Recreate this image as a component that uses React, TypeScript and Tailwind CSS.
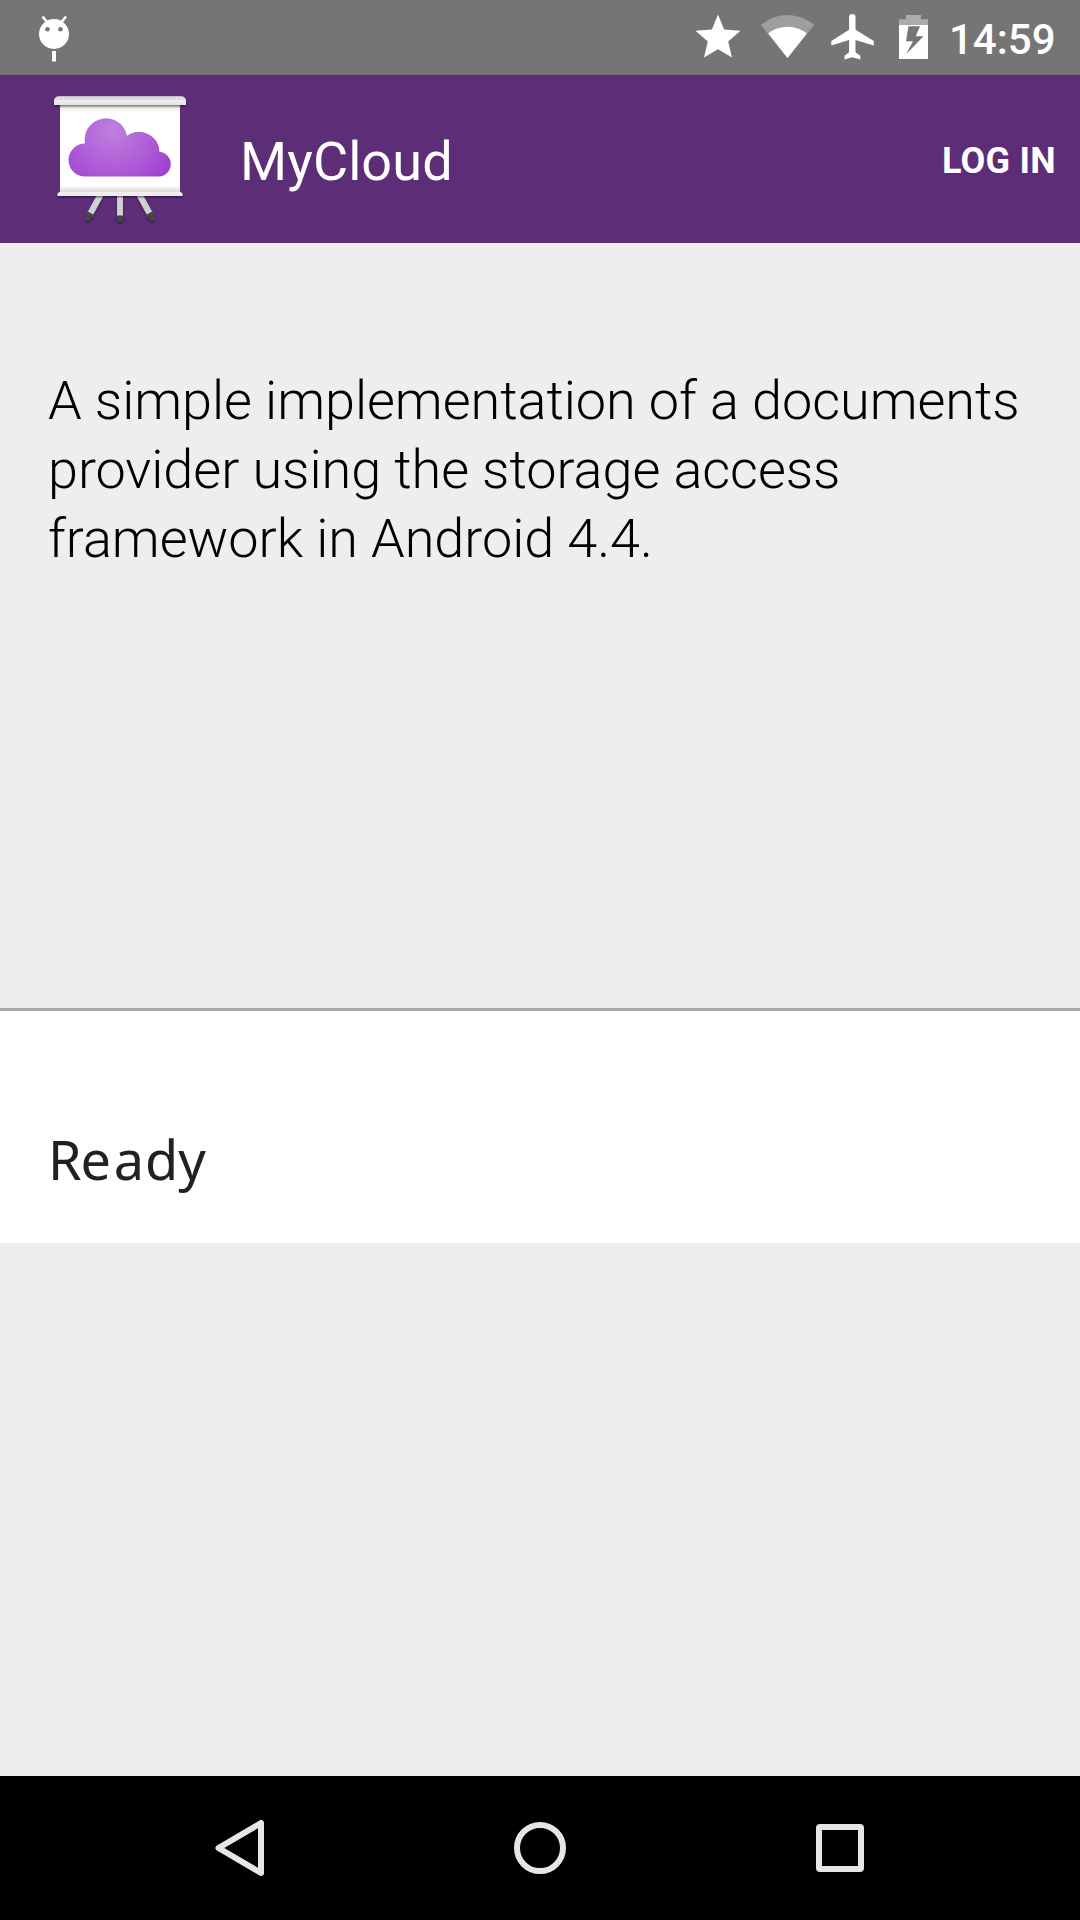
function StatusBar() {
  return (
    <div className="flex h-[75px] items-center bg-[#757575] pl-[36px] pr-[25px]">
      <svg className="h-[75px] w-[36px] shrink-0" viewBox="36 0 36 75">
        <path d="M42.5 16.5 47 22M66 16.5 61.500 22" stroke="#fff" strokeWidth="2.6" />
        <circle cx="54" cy="34" r="15" fill="#fff" />
        <circle cx="47.500" cy="29.300" r="2.300" fill="#757575" />
        <circle cx="60.500" cy="29.300" r="2.300" fill="#757575" />
        <rect x="52" y="51" width="4" height="10.500" fill="#fff" />
      </svg>
      <svg className="ml-auto h-[75px] w-[260px] shrink-0" viewBox="680 0 260 75" fill="#fff">
        <path d="M718 14.500 724.100 29.500 740.500 30.800 728.200 41.500 732 57.500 718 49.200 704 57.500 707.800 41.500 695.500 30.800 711.900 29.500Z" />
        <path d="M787.500 58 761 25Q773 15 787.500 15T814.300 25Z" fillOpacity=".3" />
        <path d="M787.500 58 768.200 33.500Q776.500 26.700 787.500 26.700T806.800 33.500Z" />
        <path d="M873.800 45.500V40.900L855.500 29.700V17.300A3.200 3.200 0 0 0 849.100 17.300V29.700L831.300 40.900V45.500L849.100 40V52.200L844.500 55.700V59.600L852.300 57.200 860.300 59.600V55.700L855.500 52.200V40Z" />
        <path d="M899 25V19.300H906V15H921V19.300H928V25Z" fillOpacity=".4" />
        <path fillRule="evenodd" d="M899 25H928V59H899ZM908.500 26.300 906 41.300H913L906.300 54 923.500 36.200H915.700L920 26.300Z" />
      </svg>
      <div className="ml-[9px] w-[106px] whitespace-nowrap pt-[4px] text-[42px] leading-[48px] font-medium text-white">14:59</div>
    </div>
  );
}

function CloudBoard() {
  return (
    <svg className="h-[144px] w-[144px] shrink-0" viewBox="48 87 144 144">
      <defs>
        <radialGradient id="cloud" gradientUnits="userSpaceOnUse" cx="113" cy="131" r="66">
          <stop stopColor="#c080e0" />
          <stop offset="1" stopColor="#a042d0" />
        </radialGradient>
        <linearGradient id="rail" x2="0" y2="1">
          <stop stopColor="#b9a9c4" />
          <stop offset=".15" stopColor="#dcd8de" />
          <stop offset=".4" stopColor="#dfdfdf" />
          <stop offset=".5" stopColor="#eee" />
          <stop offset="1" stopColor="#e2e2e2" />
        </linearGradient>
        <linearGradient id="sheet" x2="0" y2="1">
          <stop stopColor="#d0d0d0" />
          <stop offset=".04" stopColor="#ececec" />
          <stop offset=".1" stopColor="#fff" />
          <stop offset=".93" stopColor="#fff" />
          <stop offset="1" stopColor="#d6d6d6" />
        </linearGradient>
        <filter id="shade" x="-10%" y="-20%" width="120%" height="150%">
          <feDropShadow dx="0" dy="1.500" stdDeviation="1.300" floodOpacity=".5" />
        </filter>
      </defs>
      <g filter="url(#shade)" strokeWidth="6">
        <path d="M101 194 89.500 215M120 194V216M139 194 150.500 215" stroke="#cfcfcf" />
        <path d="M90.600 213 88 218M120 215.500V219.500M149.400 213 152 218" stroke="#454545" />
        <circle cx="88" cy="218" r="3" fill="#444" />
        <circle cx="120" cy="219" r="3" fill="#444" />
        <circle cx="152" cy="218" r="3" fill="#444" />
      </g>
      <rect x="60" y="104" width="120" height="88" fill="url(#sheet)" />
      <path filter="url(#shade)" d="M54 105V100Q55.500 96 59 96H181Q184.500 96 186 100V105Z" fill="url(#rail)" />
      <path filter="url(#shade)" d="M60 191.500H180L182.500 193.500V196H57.500V193.500Z" fill="#eee" />
      <path d="M85 176.600A16.500 16.500 0 0 1 85 143.600A21.200 21.200 0 0 1 127 135.800A20.600 20.600 0 0 1 159.500 151.700A12.500 12.500 0 0 1 159.200 176.600Z" fill="url(#cloud)" />
    </svg>
  );
}

export default function App() {
  return (
    <div className="flex h-[1920px] w-[1080px] flex-col overflow-hidden bg-[#eeeeee] font-['Roboto',sans-serif]">
      <StatusBar />
      <header className="flex h-[168px] items-center bg-[#5e2d78] pl-[48px] pr-[24px] text-white">
        <CloudBoard />
        <h1 className="ml-[48px] pt-[5px] text-[54px] leading-[64px] font-normal tracking-[0.1px]">MyCloud</h1>
        <button className="ml-auto pt-[4px] text-[36px] leading-[42px] font-bold tracking-[0.25px]">LOG IN</button>
      </header>
      <main className="flex grow flex-col">
        <section className="h-[768px] border-b-[3px] border-[#aaaaaa] px-[48px] pt-[123px]">
          <p className="whitespace-nowrap text-[54px] leading-[69px] font-light tracking-[-0.045px] text-black">
            A simple implementation of a documents
            <br />
            provider using the storage access
            <br />
            framework in Android 4.4.
          </p>
        </section>
        <section className="h-[232px] bg-white px-[48px] pt-[116px]">
          <p className="font-['Noto_Sans',sans-serif] text-[54px] leading-[64px] text-[#212121]">
            <span className="tracking-[-1.2px]">R</span>
            <span className="tracking-[2.9px]">e</span>
            <span className="tracking-[1px]">a</span>dy
          </p>
        </section>
      </main>
      <nav className="flex h-[144px] shrink-0 justify-center bg-black">
        {["M261 1823V1873L218.500 1848Z", "M517 1848a23 23 0 1 0 46 0a23 23 0 1 0 -46 0Z", "M820 1827H860Q861 1827 861 1828V1868Q861 1869 860 1869H820Q819 1869 819 1868V1828Q819 1827 820 1827Z"].map((d, i) => (
          <svg key={d} className="h-[144px] w-[300px]" viewBox={`${90 + i * 300} 1776 300 144`} fill="none" stroke="#e6e6e6" strokeWidth="6" strokeLinejoin="round">
            <path d={d} />
          </svg>
        ))}
      </nav>
    </div>
  );
}
